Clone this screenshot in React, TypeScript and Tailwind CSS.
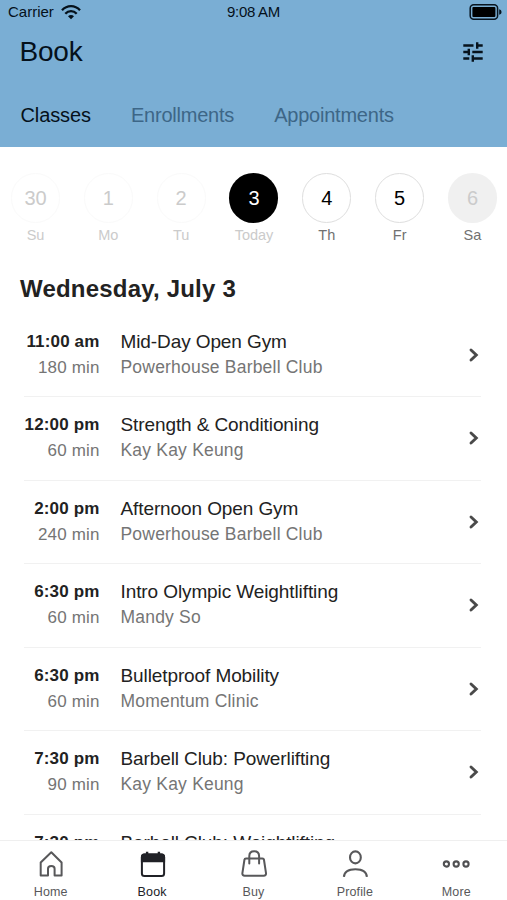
import React from "react";

type Day = { num: string; label: string; circle: string; text: string };

const days: Day[] = [
  { num: "30", label: "Su", circle: "border border-[#fafafa] text-[#cbcbcb]", text: "text-[#cbcbcb]" },
  { num: "1", label: "Mo", circle: "border border-[#fafafa] text-[#cbcbcb]", text: "text-[#cbcbcb]" },
  { num: "2", label: "Tu", circle: "border border-[#fafafa] text-[#cbcbcb]", text: "text-[#cbcbcb]" },
  { num: "3", label: "Today", circle: "bg-black text-white", text: "text-[#cbcbcb]" },
  { num: "4", label: "Th", circle: "border border-[#dedede] text-black", text: "text-[#717171]" },
  { num: "5", label: "Fr", circle: "border border-[#dedede] text-black", text: "text-[#717171]" },
  { num: "6", label: "Sa", circle: "bg-[#f0f0f0] text-[#cbcbcb]", text: "text-[#717171]" },
];

const classes = [
  { time: "11:00 am", length: "180 min", name: "Mid-Day Open Gym", host: "Powerhouse Barbell Club" },
  { time: "12:00 pm", length: "60 min", name: "Strength & Conditioning", host: "Kay Kay Keung" },
  { time: "2:00 pm", length: "240 min", name: "Afternoon Open Gym", host: "Powerhouse Barbell Club" },
  { time: "6:30 pm", length: "60 min", name: "Intro Olympic Weightlifting", host: "Mandy So" },
  { time: "6:30 pm", length: "60 min", name: "Bulletproof Mobility", host: "Momentum Clinic" },
  { time: "7:30 pm", length: "90 min", name: "Barbell Club: Powerlifting", host: "Kay Kay Keung" },
  { time: "7:30 pm", length: "", name: "Barbell Club: Weightlifting", host: "" },
];

function WifiIcon() {
  return (
    <svg width="20" height="15" viewBox="0 0 20 15" fill="none" stroke="#05111b" strokeWidth="2.3">
      <path d="M1 5.3C6-.2 14-.2 19 5.3" />
      <path d="M4.3 8.8c3.2-3.5 8.2-3.5 11.4 0" />
      <path d="M7 11.3c1.7-1.7 4.3-1.7 6 0L10 14.3z" fill="#05111b" stroke="none" />
    </svg>
  );
}

function BatteryIcon() {
  return (
    <svg width="33" height="16" viewBox="0 0 33 16" fill="none">
      <rect x="1.2" y=".8" width="27.4" height="14.4" rx="3.5" stroke="#07141f" strokeWidth="1.5" />
      <rect x="3.4" y="3" width="23" height="10" rx="1" fill="#000" />
      <path d="M30.2 5.2c1.7.5 2.3 1.5 2.3 2.8s-.6 2.300-2.300 2.800z" fill="#07141f" />
    </svg>
  );
}

function TuneIcon() {
  return (
    <svg width="20" height="20" viewBox="0 0 20 20" fill="none" stroke="#07131d" strokeWidth="2.4">
      <path d="M.3 3.5h10.200M14.200.3v6.400M14.200 3.500h5.500M.3 10h5.500M5.800 6.800v6.400M9.300 10h10.400M.3 16.500h6M9.800 13.300v6.400M9.800 16.500h9.900" />
    </svg>
  );
}

function HomeIcon() {
  return (
    <svg width="28" height="28" viewBox="0 0 28 28" fill="none" stroke="#58585a" strokeWidth="2" strokeLinejoin="round">
      <path d="M3.700 12.500 14.300 2.200l10.300 10.300v13h-7v-6.800c0-1.700-1.200-2.600-3.300-2.600s-3.300.9-3.300 2.600v6.800H3.700z" />
    </svg>
  );
}

function BookIcon() {
  return (
    <svg width="28" height="28" viewBox="0 0 28 28" fill="none" stroke="#202126" strokeWidth="2">
      <rect x="3.900" y="4.400" width="22.200" height="21.700" rx="2.600" />
      <path d="M3.900 11.200V7C3.900 5.400 5 4.400 6.500 4.400h17c1.500 0 2.600 1 2.600 2.600v4.200z" fill="#202126" />
      <path d="M9.100 1.800V6M20.900 1.800V6" strokeWidth="2.400" />
    </svg>
  );
}

function BuyIcon() {
  return (
    <svg width="28" height="28" viewBox="0 0 28 28" fill="none" stroke="#58585a" strokeWidth="2" strokeLinecap="round" strokeLinejoin="round">
      <path d="M6 8.500h16.400c.9 0 1.500.6 1.600 1.500l2 13.200c.2 1.500-.7 2.500-2.200 2.500H4.600c-1.500 0-2.400-1-2.200-2.500L4.400 10c.1-.9.700-1.500 1.600-1.500z" />
      <path d="M9.300 13.500V6.100c0-2.900 1.900-4.800 4.900-4.800s4.900 1.900 4.900 4.800v7.400" />
    </svg>
  );
}

function ProfileIcon() {
  return (
    <svg width="28" height="28" viewBox="0 0 28 28" fill="none" stroke="#58585a" strokeWidth="2.100">
      <ellipse cx="14.400" cy="7.400" rx="5.400" ry="6" />
      <path d="M2.900 26.900c.3-5.200 4.500-7.700 11.500-7.700s11.200 2.500 11.500 7.700" />
    </svg>
  );
}

function MoreIcon() {
  return (
    <svg width="28" height="28" viewBox="0 0 28 28" fill="none" stroke="#505052" strokeWidth="2.100">
      <circle cx="4.400" cy="14" r="2.600" />
      <circle cx="14.200" cy="14" r="2.600" />
      <circle cx="24" cy="14" r="2.600" />
    </svg>
  );
}

const tabs = [
  { label: "Home", icon: <HomeIcon />, color: "text-[#58585a]" },
  { label: "Book", icon: <BookIcon />, color: "text-[#202126]" },
  { label: "Buy", icon: <BuyIcon />, color: "text-[#58585a]" },
  { label: "Profile", icon: <ProfileIcon />, color: "text-[#58585a]" },
  { label: "More", icon: <MoreIcon />, color: "text-[#58585a]" },
];

export default function App() {
  return (
    <div className="flex h-[900px] w-[507px] flex-col overflow-hidden bg-white font-['Liberation_Sans',Arial,sans-serif]">
      <header className="h-[147px] shrink-0 bg-[#7aaed4] text-[#05111b]">
        <div className="grid h-6 grid-cols-3 items-center pr-[5px] pl-2 text-[15px]">
          <div className="flex items-center gap-[7px]">
            <span>Carrier</span>
            <WifiIcon />
          </div>
          <span className="pr-[3px] text-center text-[15px] tracking-[-0.3px]">9:08 AM</span>
          <div className="flex justify-end">
            <BatteryIcon />
          </div>
        </div>
        <div className="flex h-[55px] items-center justify-between pr-6 pl-[19.5px]">
          <h1 className="text-[28px] tracking-[-0.2px]">Book</h1>
          <TuneIcon />
        </div>
        <nav className="flex h-[72px] items-center gap-10 pl-[20.5px] text-[20px] tracking-[-0.22px]">
          <span className="tracking-[-0.1px]">Classes</span>
          <span className="text-[#3d6687]">Enrollments</span>
          <span className="text-[#3d6687]">Appointments</span>
        </nav>
      </header>

      <main className="min-h-0 flex-1 overflow-hidden">
        <div className="flex justify-between pt-[26px] pr-[10px] pl-[11px]">
          {days.map((d) => (
            <div key={d.label} className="flex w-[49px] flex-col items-center">
              <div className={`flex h-[50px] w-[49px] items-center justify-center rounded-full text-[20px] ${d.circle}`}>{d.num}</div>
              <span className={`mt-[2px] text-[14.5px] leading-5 ${d.text}`}>{d.label}</span>
            </div>
          ))}
        </div>
        <h2 className="mt-7 pl-5 text-[24px] leading-8 font-bold tracking-[0.2px] text-[#222]">Wednesday, July 3</h2>
        <ul className="mt-[8.5px] pr-[26px] pl-6">
          {classes.map((c, i) => (
            <li key={i} className="flex h-[83.5px] items-center border-b border-[#f1f1f1]">
              <div className="w-[75.5px] text-right whitespace-nowrap">
                <div className="text-[17px] leading-6 font-bold tracking-[0.15px] text-[#222]">{c.time}</div>
                <div className="mt-0.5 h-6 text-[17px] leading-6 tracking-[0.15px] text-[#757575]">{c.length}</div>
              </div>
              <div className="ml-[21px] flex-1">
                <div className="text-[19px] leading-6 tracking-[-0.1px] text-[#222]">{c.name}</div>
                <div className="mt-px mb-px h-6 text-[17.5px] leading-6 tracking-[0.2px] text-[#757575]">{c.host}</div>
              </div>
              <svg width="15" height="16" viewBox="0 0 15 16" fill="none" stroke="#4a4a4a" strokeWidth="2.900" strokeLinecap="round">
                <path d="M5 3 10.300 8 5 13" />
              </svg>
            </li>
          ))}
        </ul>
      </main>

      <footer className="flex h-[60px] shrink-0 border-t border-[#efefef] bg-white pt-[9px]">
        {tabs.map((t) => (
          <div key={t.label} className={`flex flex-1 flex-col items-center ${t.color}`}>
            {t.icon}
            <span className="mt-1.5 text-[12.5px] leading-4 tracking-[0.15px]">{t.label}</span>
          </div>
        ))}
      </footer>
    </div>
  );
}
